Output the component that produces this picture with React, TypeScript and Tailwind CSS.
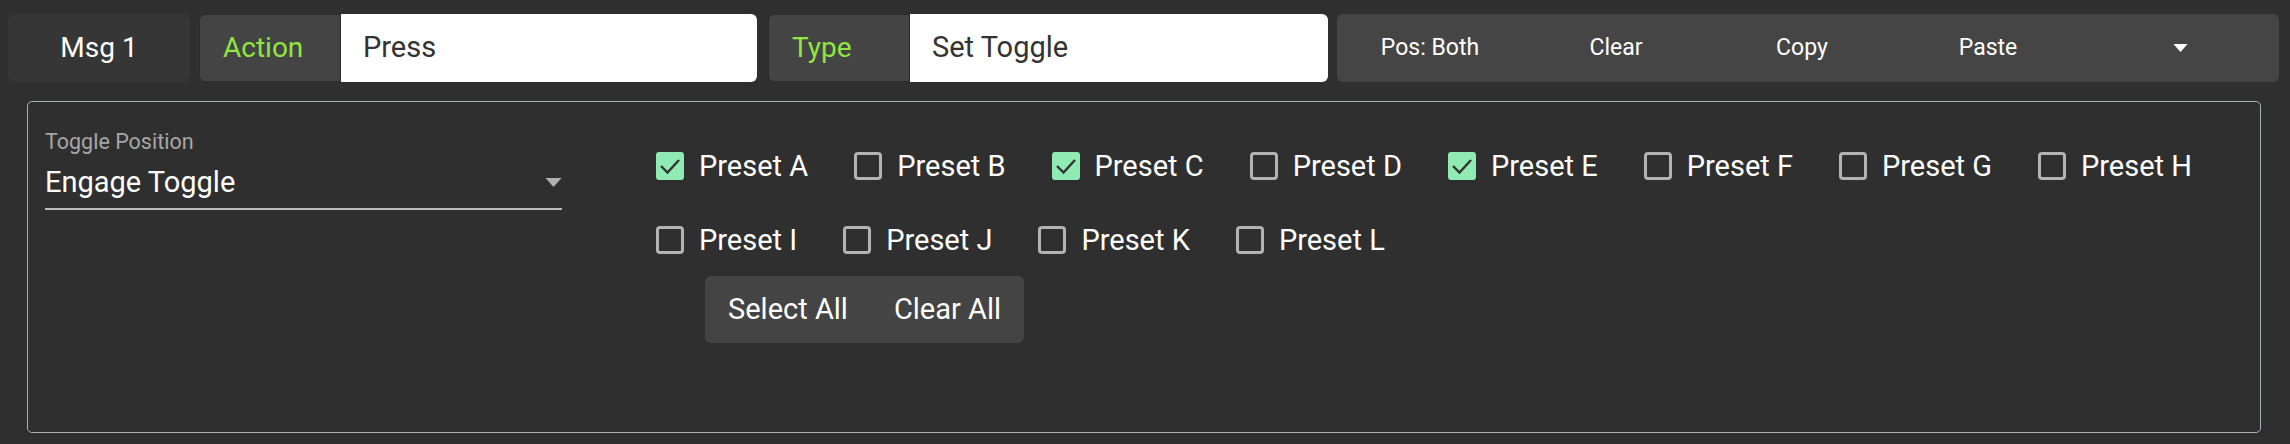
import React from 'react';

type Preset = { name: string; checked: boolean };

const presets: Preset[] = [
  { name: 'Preset A', checked: true },
  { name: 'Preset B', checked: false },
  { name: 'Preset C', checked: true },
  { name: 'Preset D', checked: false },
  { name: 'Preset E', checked: true },
  { name: 'Preset F', checked: false },
  { name: 'Preset G', checked: false },
  { name: 'Preset H', checked: false },
  { name: 'Preset I', checked: false },
  { name: 'Preset J', checked: false },
  { name: 'Preset K', checked: false },
  { name: 'Preset L', checked: false },
];

const Caret = ({ className }: { className: string }) => (
  <svg viewBox="0 0 16 9" className={className}>
    <path d="M0 0 L16 0 L8 9 Z" fill="currentColor" />
  </svg>
);

const Checkbox = ({ checked }: { checked: boolean }) =>
  checked ? (
    <div className="w-[28px] h-[28px] rounded-[3px] bg-[#8feab4] flex items-center justify-center">
      <svg viewBox="0 0 28 28" className="w-[28px] h-[28px]">
        <path d="M5 14 L11.5 20.5 L23 8" fill="none" stroke="#333333" strokeWidth="2.4" />
      </svg>
    </div>
  ) : (
    <div className="w-[28px] h-[28px] rounded-[4px] border-[3px] border-[#b3b3b3]" />
  );

const LabeledField = ({ label, value, width }: { label: string; value: string; width: string }) => (
  <div className={`flex h-[68px] ${width}`}>
    <div className="w-[142px] shrink-0 flex items-center pl-[23px] bg-[#444444] border border-[#2a2a2a] rounded-l-[6px] text-[#90e542] text-[28px]">
      {label}
    </div>
    <div className="flex-1 flex items-center pl-[22px] bg-white rounded-r-[6px] text-[#333333] text-[29px]">
      {value}
    </div>
  </div>
);

export default function App() {
  return (
    <div className="w-[2290px] h-[444px] bg-[#2f2f2f] font-['Roboto',sans-serif] overflow-hidden">
      {/* top bar */}
      <div className="flex items-center pt-[14px] pl-[8px]">
        <div className="w-[182px] h-[68px] rounded-[6px] bg-[#363636] flex items-center justify-center text-white text-[28px]">
          Msg 1
        </div>
        <div className="ml-[9px]">
          <LabeledField label="Action" value="Press" width="w-[558px]" />
        </div>
        <div className="ml-[11px]">
          <LabeledField label="Type" value="Set Toggle" width="w-[560px]" />
        </div>
        <div className="ml-[9px] w-[942px] h-[68px] rounded-[6px] bg-[#454545] flex items-center text-white text-[23px]">
          <button className="w-[186px] h-full flex items-center justify-center">Pos: Both</button>
          <button className="w-[186px] h-full flex items-center justify-center">Clear</button>
          <button className="w-[186px] h-full flex items-center justify-center">Copy</button>
          <button className="w-[186px] h-full flex items-center justify-center">Paste</button>
          <button className="flex-1 h-full flex items-center justify-center">
            <Caret className="w-[15px] h-[8px] text-white" />
          </button>
        </div>
      </div>

      {/* panel */}
      <div className="mt-[19px] ml-[27px] w-[2234px] h-[332px] border border-[#aab0bd] rounded-[5px] flex items-start pl-[17px] pt-[28px]">
        <div className="w-[517px] shrink-0">
          <div className="text-[21.5px] leading-[24px] text-[#a6a6a6]">Toggle Position</div>
          <div className="mt-[11px] flex items-center justify-between border-b-2 border-[#bdbdbd] pb-[9px]">
            <span className="text-[29px] leading-[34px] text-white">Engage Toggle</span>
            <Caret className="w-[17px] h-[9px] text-[#b0b0b0]" />
          </div>
        </div>

        <div className="ml-[94px] pt-[16px] flex-1">
          <div className="flex flex-wrap gap-x-[46px] gap-y-[34px] pr-[20px]">
            {presets.map((p) => (
              <label key={p.name} className="h-[40px] flex items-center gap-[15px] text-white text-[29px] leading-[40px]">
                <Checkbox checked={p.checked} />
                <span>{p.name}</span>
              </label>
            ))}
          </div>
          <div className="mt-[16px] ml-[49px] inline-flex h-[67px] rounded-[6px] bg-[#444444] text-white text-[29px]">
            <button className="px-[23px] flex items-center">Select All</button>
            <button className="px-[23px] flex items-center">Clear All</button>
          </div>
        </div>
      </div>
    </div>
  );
}
